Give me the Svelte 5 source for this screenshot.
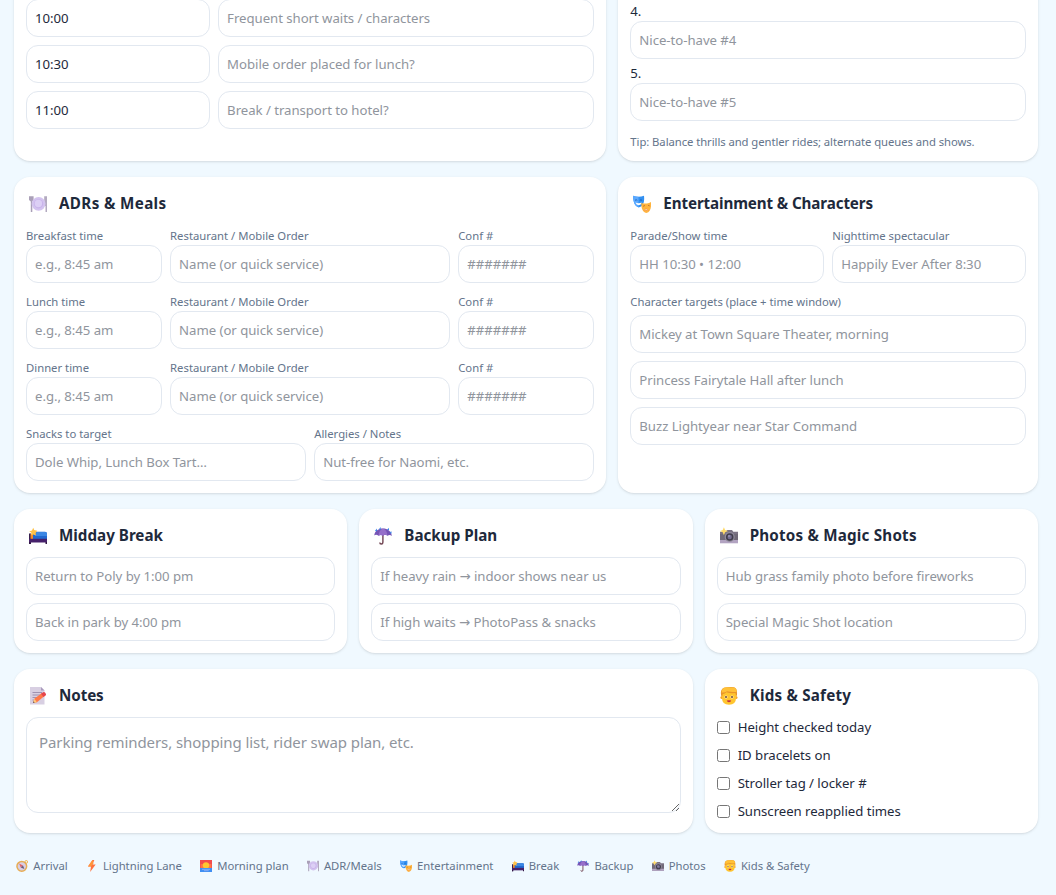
<script>
  const schedule = [
    ['10:00', 'Frequent short waits / characters'],
    ['10:30', 'Mobile order placed for lunch?'],
    ['11:00', 'Break / transport to hotel?'],
  ];
  const meals = ['Breakfast', 'Lunch', 'Dinner'];
  const characters = [
    'Mickey at Town Square Theater, morning',
    'Princess Fairytale Hall after lunch',
    'Buzz Lightyear near Star Command',
  ];
  const plans = [
    { icon: 'bed', title: 'Midday Break', track: 0, items: ['Return to Poly by 1:00 pm', 'Back in park by 4:00 pm'] },
    { icon: 'umbrella', title: 'Backup Plan', track: 0, items: ['If heavy rain → indoor shows near us', 'If high waits → PhotoPass & snacks'] },
    { icon: 'camera', title: 'Photos & Magic Shots', track: 0.2, items: ['Hub grass family photo before fireworks', 'Special Magic Shot location'] },
  ];
  const safety = ['Height checked today', 'ID bracelets on', 'Stroller tag / locker #', 'Sunscreen reapplied times'];
  const legend = [
    ['compass', 'Arrival'],
    ['bolt', 'Lightning Lane'],
    ['sunrise', 'Morning plan'],
    ['plate', 'ADR/Meals'],
    ['masks', 'Entertainment'],
    ['bed', 'Break'],
    ['umbrella', 'Backup'],
    ['camera', 'Photos'],
    ['child', 'Kids & Safety'],
  ];
</script>

{#snippet icon(name)}
  <svg class="icon" viewBox="0 0 18 18" aria-hidden="true">
    {#if name === 'plate'}
      <path d="M0 1.200h4.600v3.600L3.300 6.400V17H1.800V6.400L0 5z" fill="#aaa0b8" />
      <path d="M15.200 1.200H18V17h-1.500v-6h-1.300z" fill="#b3aac0" />
      <circle cx="9.600" cy="8.800" r="6.900" fill="#d3c3ef" />
      <circle cx="9.600" cy="8.800" r="4.600" fill="#c8b3ea" />
      <circle cx="9.400" cy="8.500" r="3.700" fill="#dccff5" />
    {:else if name === 'masks'}
      <path d="M0 .8c3.500 1.300 7.500 1.300 11 0 .6 5-.1 10.700-5.200 11.700C1.200 11 .2 6 0 .8z" fill="#3290f1" />
      <path d="M0 .8c2 .8 4 1 5.500 1v10.500C1.200 11 .2 6 0 .8z" fill="#5ba9ff" />
      <path d="M2 5.300q1.200-1 2.300 0M6.800 5.300q1.200-1 2.300 0" fill="none" stroke="#155bb4" stroke-width=".8" />
      <path d="M2.500 7.600q3 1.200 6.200 0-.5 2.500-3 2.700-2.400-.2-3.200-2.700z" fill="#fff" />
      <path d="M8.300 8c3.200.9 6.500.9 9.700-.9.4 5-.3 10-4.700 10.900C9.300 17 8.200 13 8.300 8z" fill="#ffb43e" />
      <path d="M10 11.300l2-.8m3-.1 1.700.5" stroke="#bd682b" stroke-width=".8" />
      <path d="M11 15.500q2-3.200 4.500 0-2.300-.8-4.500 0z" fill="#fff" stroke="#f0843d" stroke-width=".5" />
    {:else if name === 'bed'}
      <path d="M0 6.500h2V17H0z" fill="#37204f" />
      <path d="M1.500 7h7v5h-7z" fill="#f28b28" />
      <path d="M6 4.800h10q2 0 2 2V13H4V7q0-2.200 2-2.200z" fill="#2168cf" />
      <path d="M7.500 5H16q2 0 2 2v2H6z" fill="#3b87e4" />
      <path d="M4.200.8 5.200 3l3 .8-1.500 2.300.2 2.500-2.700-1-2.200.8.3-2.700L.3 4.200l2.700-.7z" fill="#ffc247" />
      <path d="M0 11.800h18v3.700H0z" fill="#46216b" />
      <path d="M0 15h1.500v2H0zm16.500 0H18v2h-1.500z" fill="#321744" />
    {:else if name === 'umbrella'}
      <path d="M8.900 7v8.200q0 1.800-1.600 1.800-1.500 0-1.500-1.500" fill="none" stroke="#714452" stroke-width="1.400" />
      <path d="M.2 8.500C1 3.500 4.500 1.500 9 1.500s8.200 2.500 8.900 7.500q-2.200-2-4.400-.2Q11.200 7 9 8.700q-2.200-1.600-4.500 0Q2.200 7-.2 8.500z" fill="#7654b5" />
      <path d="M9 1.500Q5 3 4.500 8.700q2.300-1.600 4.500 0 2.200-1.700 4.500.1Q13 3 9 1.500z" fill="#966fca" />
      <path d="M1 4 2.700 1.500l.4 2.800zM4.800 2.500 6.500 0l.4 2.500zM13 3l1.700-2.200.4 2.500zM15.500 6.200 17.200 4l.5 2.500z" fill="#3b83e9" />
    {:else if name === 'camera'}
      <path d="M5.500 4.700 7 3h5l1.300 1.700H18V16H0V4.700z" fill="#7b7384" />
      <path d="M0 12.500h18v3.800H0z" fill="#b2a3c1" />
      <path d="M0 7h18v6H0z" fill="#706978" />
      <circle cx="9.700" cy="10" r="5" fill="#918b9c" />
      <circle cx="9.700" cy="10" r="3.800" fill="#413d4c" />
      <circle cx="9.700" cy="10" r="2.200" fill="#756d91" />
      <circle cx="9" cy="9" r=".8" fill="#b0aecb" />
      <path d="m3.900.3 1.200 2.700 2.900 1.100-2.900 1.100-1.200 3-1.200-3L0 4.100 2.700 3z" fill="#ffdb68" />
    {:else if name === 'note'}
      <path d="M1 0h11l3.500 3.500V17.500H1z" fill="#d8cfe2" />
      <path d="M12 0v3.500h3.500z" fill="#aa9bbd" />
      <path d="M3.500 5.500h9.500M3.500 8h8.500M3.500 10.500H10M3.500 13H7" stroke="#9a8bab" stroke-width=".9" />
      <path d="m4 16 1.300-4.200 8-6 2.500 3-7.900 6.400z" fill="#ff7849" />
      <path d="m12 6.800 2.200-1.600q1-.6 1.800.4l.8 1.100q.7 1-.3 1.800l-2 1.500z" fill="#e5454c" />
      <path d="m4 16 1.300-4.200 2.600 3.400z" fill="#ffcb79" />
      <path d="m4 16 .5-1.700 1.200 1.200z" fill="#4e465b" />
    {:else if name === 'child'}
      <circle cx="1.900" cy="10.500" r="1.500" fill="#f6a527" />
      <circle cx="16" cy="10.500" r="1.500" fill="#f6a527" />
      <path d="M2 4h14v7q0 6.700-7 6.700T2 11z" fill="#ffc52f" />
      <path d="M1.300 9Q-.3 2.500 4 .8 8-.2 14 .2q3.700.8 2.900 8.800l-1-.5-.5-2.500q-5 .5-9-.7Q5 7 2.600 7.200L2.300 9z" fill="#e9952a" />
      <path d="M1.700 5.500Q1.300 1 6 .3l8 .1q3 .6 2.500 4.500-5 .6-9.500-.6-2 1.700-5.300 1.200z" fill="#ffc138" />
      <circle cx="6" cy="9.900" r="1.500" fill="#fff0cf" />
      <circle cx="12" cy="9.900" r="1.500" fill="#fff0cf" />
      <circle cx="6" cy="9.900" r="1" fill="#70492e" />
      <circle cx="12" cy="9.900" r="1" fill="#70492e" />
      <path d="M6.800 13.500q2.200-.6 4.400 0-.3 1.800-2.200 1.800t-2.200-1.800z" fill="#c42e43" />
    {:else if name === 'compass'}
      <circle cx="15.400" cy="2.800" r="2" fill="none" stroke="#eea93c" stroke-width="1.300" />
      <circle cx="8.700" cy="9.500" r="7.300" fill="#d8cee4" stroke="#e7ad55" stroke-width="2.200" />
      <path d="m4.700 5.300 5.800 3-3.400 3.100z" fill="#e06367" />
      <path d="m12.600 13.500-5.500-2.100 3.400-3.100z" fill="#685d7a" />
    {:else if name === 'bolt'}
      <path d="M9.700 0 3 9.800h4.500L6.200 18 14.500 6.700H9.800L12.500 0z" fill="#ff7340" />
      <path d="M9.700 0 3 9.800h4.500L11 5z" fill="#ff963c" />
    {:else if name === 'sunrise'}
      <path d="M0 0h18v18H0z" fill="#f24c4d" />
      <path d="M1 6h16v7H1z" fill="#ff7445" />
      <circle cx="9" cy="8" r="4.800" fill="#ffc631" />
      <path d="M0 12h18v6H0z" fill="#408ff3" />
      <path d="M3 14h12M6 16h7" stroke="#a8b9f4" />
    {/if}
  </svg>
{/snippet}

{#snippet heading(name, title, track)}
  <h2 style:letter-spacing="{track}px"><span class="emoji">{@render icon(name)}</span>{title}</h2>
{/snippet}

<main>
  <div class="board">
    <section class="card w7 first schedule">
      {#each schedule as [time, hint]}
        <div class="row">
          <input class="c4" value={time} />
          <input class="c8" placeholder={hint} />
        </div>
      {/each}
    </section>

    <section class="card w5 first wishes">
      {#each [4, 5] as n}
        <label class="wish"><span>{n}.</span><input placeholder={`Nice-to-have #${n}`} /></label>
      {/each}
      <p class="tip">Tip: Balance thrills and gentler rides; alternate queues and shows.</p>
    </section>

    <section class="card w7">
      {@render heading('plate', 'ADRs & Meals', 0.36)}
      <div class="stack">
        {#each meals as meal}
          <div class="row">
            <label class="field c3"><span>{meal} time</span><input placeholder="e.g., 8:45 am" /></label>
            <label class="field c6"><span>Restaurant / Mobile Order</span><input placeholder="Name (or quick service)" /></label>
            <label class="field c3"><span>Conf #</span><input placeholder="#######" /></label>
          </div>
        {/each}
        <div class="row">
          <label class="field c6"><span>Snacks to target</span><input placeholder="Dole Whip, Lunch Box Tart…" /></label>
          <label class="field c6"><span>Allergies / Notes</span><input placeholder="Nut-free for Naomi, etc." /></label>
        </div>
      </div>
    </section>

    <section class="card w5">
      {@render heading('masks', 'Entertainment & Characters', -0.12)}
      <div class="stack">
        <div class="row">
          <label class="field c6"><span>Parade/Show time</span><input placeholder="HH 10:30 • 12:00" /></label>
          <label class="field c6"><span>Nighttime spectacular</span><input placeholder="Happily Ever After 8:30" /></label>
        </div>
        <div class="field targets">
          <span>Character targets (place + time window)</span>
          <div class="stack">
            {#each characters as hint}<input placeholder={hint} />{/each}
          </div>
        </div>
      </div>
    </section>

    {#each plans as plan}
      <section class="card w4">
        {@render heading(plan.icon, plan.title, plan.track)}
        <div class="stack">
          {#each plan.items as hint}<input placeholder={hint} />{/each}
        </div>
      </section>
    {/each}

    <section class="card w8">
      {@render heading('note', 'Notes', -0.1)}
      <textarea placeholder="Parking reminders, shopping list, rider swap plan, etc."></textarea>
    </section>

    <section class="card w4">
      {@render heading('child', 'Kids & Safety', 0.2)}
      <div class="stack">
        {#each safety as item}
          <label class="check"><input type="checkbox" />{item}</label>
        {/each}
      </div>
    </section>
  </div>

  <footer>
    {#each legend as [name, text]}
      <span class="key"><span class="mini">{@render icon(name)}</span>{text}</span>
    {/each}
  </footer>
</main>

<style>
  :global(body) {
    margin: 0;
    overflow: hidden;
    background: #f0f9ff;
  }
  main {
    box-sizing: border-box;
    width: 1056px;
    height: 895px;
    overflow: hidden;
    padding: 0 18px 0 14px;
    background: #f0f9ff;
    color: #1e293b;
    font-family: 'Noto Sans', 'DejaVu Sans', sans-serif;
    font-size: 13.2px;
    line-height: 20px;
    letter-spacing: -0.04px;
  }
  .board {
    display: grid;
    grid-template-columns: repeat(12, minmax(0, 1fr));
    column-gap: 12px;
    row-gap: 16px;
    margin-top: -27px;
  }
  .card {
    box-sizing: border-box;
    padding: 12px;
    border-radius: 16px;
    background: #fff;
    box-shadow: 0 1px 3px rgba(0, 0, 0, 0.1), 0 1px 2px -1px rgba(0, 0, 0, 0.1);
  }
  .w4 { grid-column: span 4; }
  .w5 { grid-column: span 5; }
  .w7 { grid-column: span 7; }
  .w8 { grid-column: span 8; }
  .first { height: 188px; }
  .schedule {
    display: flex;
    flex-direction: column;
    gap: 8px;
    padding-top: 26px;
  }
  .wishes {
    display: flex;
    flex-direction: column;
    gap: 4px;
    padding-top: 28px;
  }
  .wish { display: flex; flex-direction: column; }
  .tip {
    margin: 9px 0 0;
    color: #64748b;
    font-size: 11.3px;
    line-height: 16px;
    letter-spacing: -0.07px;
  }
  h2 {
    display: flex;
    align-items: center;
    gap: 8px;
    height: 28px;
    margin: 0 0 8px;
    font-size: 15.2px;
    font-weight: 700;
  }
  .emoji {
    display: flex;
    flex: none;
    width: 22px;
    padding: 2px 0 0 3px;
  }
  .icon { display: block; width: 18px; height: 18px; }
  .stack { display: flex; flex-direction: column; gap: 8px; }
  .row {
    display: grid;
    grid-template-columns: repeat(12, minmax(0, 1fr));
    gap: 8px;
  }
  .c3 { grid-column: span 3; }
  .c4 { grid-column: span 4; }
  .c6 { grid-column: span 6; }
  .c8 { grid-column: span 8; }
  .field { display: flex; flex-direction: column; }
  .field > span {
    padding-top: 1px;
    height: 19px;
    color: #64748b;
    font-size: 11.3px;
    letter-spacing: 0;
    white-space: nowrap;
  }
  .targets { gap: 4px; }
  input:not([type='checkbox']),
  textarea {
    box-sizing: border-box;
    width: 100%;
    min-width: 0;
    margin: 0;
    border: 1px solid #e2e8f0;
    border-radius: 12px;
    background: #fff;
    color: #1e293b;
    font: inherit;
    letter-spacing: inherit;
  }
  input:not([type='checkbox']) { height: 38px; padding: 8px; }
  textarea {
    display: block;
    height: 96px;
    padding: 12px;
    font-size: 15px;
    line-height: 24px;
    letter-spacing: -0.08px;
  }
  ::placeholder { color: #90959d; opacity: 1; }
  .check { display: flex; align-items: center; gap: 8px; }
  .check input { flex: none; width: 13px; height: 13px; margin: 0; }
  footer {
    display: flex;
    gap: 16px;
    margin-top: 25px;
    color: #64748b;
    font-size: 11.3px;
    line-height: 16px;
    letter-spacing: -0.02px;
    white-space: nowrap;
  }
  .key { display: flex; align-items: center; gap: 3px; }
  .mini { display: flex; justify-content: center; width: 16.3px; }
  .mini .icon { width: 12px; height: 12px; }
</style>
